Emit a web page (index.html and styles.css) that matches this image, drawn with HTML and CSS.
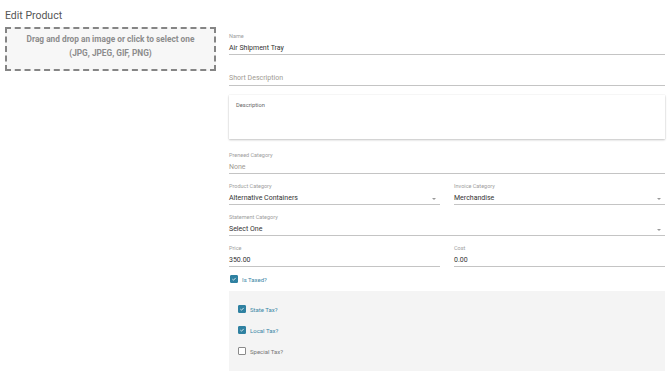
FILE: index.html
```html
<!DOCTYPE html>
<html>
<head>
<meta charset="utf-8">
<link rel="stylesheet" href="styles.css">
</head>
<body>
<div class="page">
  <h1 class="title">Edit Product</h1>
  <div class="layout">
    <div class="left">
      <div class="dropzone">
        <div>Drag and drop an image or click to select one</div>
        <div>(JPG, JPEG, GIF, PNG)</div>
      </div>
    </div>
    <div class="right">
      <div class="field">
        <div class="label">Name</div>
        <div class="value">Air Shipment Tray</div>
      </div>
      <div class="field">
        <div class="label"></div>
        <div class="value placeholder short">Short Description</div>
      </div>
      <div class="textarea">
        <div class="ta-label">Description</div>
      </div>
      <div class="field">
        <div class="label">Preneed Category</div>
        <div class="value placeholder">None</div>
      </div>
      <div class="row">
        <div class="field select">
          <div class="label">Product Category</div>
          <div class="value">Alternative Containers<span class="caret"></span></div>
        </div>
        <div class="field select">
          <div class="label">Invoice Category</div>
          <div class="value">Merchandise<span class="caret"></span></div>
        </div>
      </div>
      <div class="field select">
        <div class="label">Statement Category</div>
        <div class="value">Select One<span class="caret"></span></div>
      </div>
      <div class="row">
        <div class="field">
          <div class="label">Price</div>
          <div class="value">350.00</div>
        </div>
        <div class="field">
          <div class="label">Cost</div>
          <div class="value">0.00</div>
        </div>
      </div>
      <div class="check">
        <span class="box checked"><svg viewBox="0 0 10 10"><path d="M2.3 5.2 L4.2 7 L7.8 3.2" fill="none" stroke="#fff" stroke-width="1.3"/></svg></span>
        <span class="check-label">Is Taxed?</span>
      </div>
      <div class="panel">
        <div class="check">
          <span class="box checked"><svg viewBox="0 0 10 10"><path d="M2.3 5.2 L4.2 7 L7.8 3.2" fill="none" stroke="#fff" stroke-width="1.3"/></svg></span>
          <span class="check-label">State Tax?</span>
        </div>
        <div class="check">
          <span class="box checked"><svg viewBox="0 0 10 10"><path d="M2.3 5.2 L4.2 7 L7.8 3.2" fill="none" stroke="#fff" stroke-width="1.3"/></svg></span>
          <span class="check-label">Local Tax?</span>
        </div>
        <div class="check">
          <span class="box"></span>
          <span class="check-label muted">Special Tax?</span>
        </div>
      </div>
    </div>
  </div>
</div>
</body>
</html>
```
FILE: styles.css
```css
html, body {
  margin: 0;
  padding: 0;
  background: #fff;
  font-family: Roboto, "Liberation Sans", Arial, sans-serif;
}
.page {
  padding: 0 5px 0 5px;
}
.title {
  margin: 0;
  padding-top: 10px;
  height: 17px;
  font-size: 10.5px;
  line-height: 12px;
  font-weight: normal;
  color: #555;
}
.layout {
  display: flex;
  gap: 13px;
  align-items: flex-start;
}
.left {
  width: 211px;
  flex: none;
}
.dropzone {
  box-sizing: border-box;
  height: 44px;
  border: 2px dashed #858585;
  background: #f7f7f7;
  display: flex;
  flex-direction: column;
  align-items: center;
  padding-top: 4px;
  font-size: 8.3px;
  line-height: 13.5px;
  font-weight: bold;
  color: #8c8c8c;
}
.right {
  flex: 1;
  display: flex;
  flex-direction: column;
  gap: 7px;
  padding-top: 4px;
}
.row {
  display: flex;
  gap: 14px;
}
.row .field {
  flex: 1;
}
.field {
  border-bottom: 1px solid #c4c4c4;
}
.label {
  height: 10px;
  font-size: 5.5px;
  line-height: 10px;
  color: #9e9e9e;
}
.value {
  position: relative;
  height: 13px;
  font-size: 7px;
  line-height: 15px;
  color: #333;
}
.value.short {
  line-height: 13px;
}
.placeholder {
  color: #a09a92;
}
.caret {
  position: absolute;
  right: 4px;
  top: 7px;
  width: 0;
  height: 0;
  border-left: 2px solid transparent;
  border-right: 2px solid transparent;
  border-top: 2px solid #999;
}
.textarea {
  margin: 2px 0 4px;
  height: 44px;
  background: #fff;
  box-shadow: 0 1px 2px rgba(0, 0, 0, 0.22), 0 0 1px rgba(0, 0, 0, 0.12);
  padding: 6px 7px;
  box-sizing: border-box;
}
.ta-label {
  font-size: 5.7px;
  line-height: 8px;
  color: #666;
}
.check {
  display: flex;
  align-items: center;
  height: 10px;
  padding-left: 1px;
}
.box {
  box-sizing: border-box;
  width: 8px;
  height: 8px;
  border: 1px solid #8a8a8a;
  border-radius: 1px;
  background: #fff;
  margin-right: 4px;
  display: flex;
}
.box svg {
  width: 100%;
  height: 100%;
}
.box.checked {
  border-color: #2f81a1;
  background: #2f81a1;
}
.check-label {
  font-size: 6px;
  color: #3a87a6;
}
.check-label.muted {
  color: #777;
}
.panel {
  background: #f4f4f4;
  height: 82px;
  padding: 13px 9px 0;
  display: flex;
  flex-direction: column;
  gap: 11px;
}
.panel .check {
  padding-left: 0;
}
```
